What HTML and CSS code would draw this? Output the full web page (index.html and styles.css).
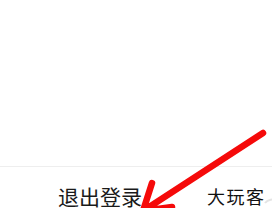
FILE: index.html
```html
<!DOCTYPE html>
<html lang="zh">
<head>
<meta charset="utf-8">
<link rel="stylesheet" href="styles.css">
</head>
<body>
<div class="page">
  <div class="blank"></div>
  <div class="sep"></div>
  <div class="row">
    <span class="logout">退出登录</span>
    <span class="brand">大玩客</span>
  </div>
  <svg class="arrow" viewBox="0 0 272 208" width="272" height="208">
    <path d="M265 203 a9 9 0 0 1 12 -2" fill="none" stroke="#e4e4e4" stroke-width="2"/>
    <path d="M263 133 L143 211 M143 211 L152 183 M143 211 L172 207" fill="none" stroke="#f50a0a" stroke-width="6.5" stroke-linecap="round" stroke-linejoin="round"/>
  </svg>
</div>
</body>
</html>
```
FILE: styles.css
```css
html, body {
  margin: 0;
  padding: 0;
  background: #ffffff;
}
.page {
  position: relative;
  width: 272px;
  height: 208px;
  overflow: hidden;
  font-family: "Noto Sans CJK SC", "Noto Sans", sans-serif;
}
.blank {
  height: 166px;
}
.sep {
  height: 1px;
  background: #eeeeee;
}
.row {
  display: flex;
  align-items: flex-start;
  padding-left: 58px;
  padding-top: 19px;
}
.logout {
  font-size: 21px;
  line-height: 21px;
  color: #1a1a1a;
}
.brand {
  margin-left: 65px;
  font-size: 18px;
  line-height: 18px;
  margin-top: 1px;
  font-weight: 400;
  color: #111111;
  letter-spacing: 1.5px;
}
.arrow {
  position: absolute;
  left: 0;
  top: 0;
}
```
